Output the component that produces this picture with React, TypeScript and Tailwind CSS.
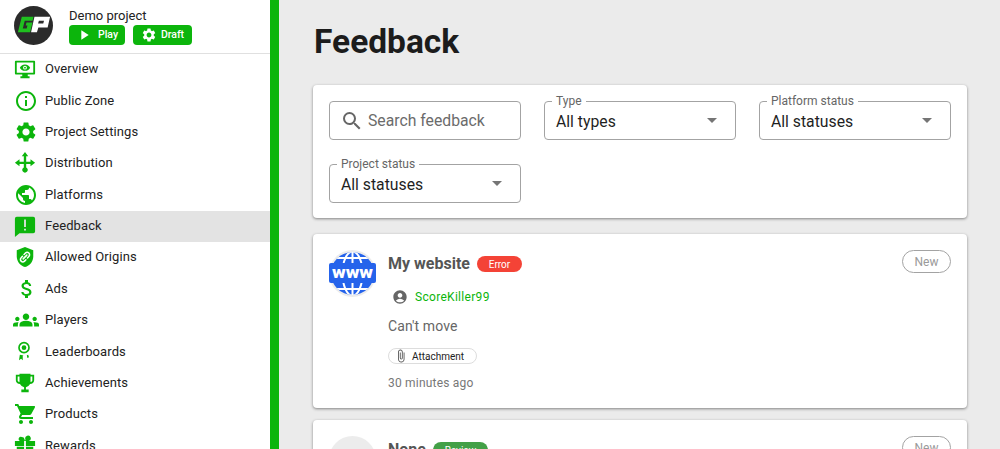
import React from 'react';
import {
  MdSettings,
  MdInfoOutline,
  MdPublic,
  MdAttachMoney,
  MdGroups,
  MdShoppingCart,
  MdAccountCircle,
  MdArrowDropDown,
  MdSearch,
  MdAttachFile,
  MdPlayArrow,
} from 'react-icons/md';

const green = 'text-[#0cb50c]';
const cardShadow = 'shadow-[0_1px_3px_rgba(0,0,0,0.45)]';

const GP = () => (
  <svg viewBox="0 0 40 40" className="w-[39px] h-[39px] shrink-0">
    <circle cx="20" cy="20" r="20" fill="#2b2b2b" />
    <path d="M8 11h12l-1 4h-8l-2 8h4l.8-3H12l.8-3H19l-2.500 10H4z" fill="#1fc01f" />
    <path d="M21 11h16l-2.500 11H25l-1.500 5h-6zM25.500 15l-.8 3H30l.8-3z" fill="#fff" fillRule="evenodd" />
  </svg>
);

const Monitor = () => (
  <svg viewBox="0 0 24 24" className="w-[22px] h-[22px]" fill="currentColor">
    <path d="M2 3h20a1 1 0 0 1 1 1v13a1 1 0 0 1-1 1h-7v2h2v2H7v-2h2v-2H2a1 1 0 0 1-1-1V4a1 1 0 0 1 1-1zm1 2v11h18V5z" />
    <path d="M12 7c-2.700 0-4.700 1.600-5.600 3.500C7.300 12.400 9.300 14 12 14s4.700-1.600 5.600-3.500C16.700 8.600 14.700 7 12 7zm0 5.600a2.100 2.100 0 1 1 0-4.200 2.100 2.100 0 0 1 0 4.200z" />
    <circle cx="12" cy="10.500" r="1" />
  </svg>
);

const Distribution = () => (
  <svg viewBox="0 0 24 24" className="w-[22px] h-[22px]" fill="currentColor">
    <path d="M12 0l3.500 4.500H13.300V10.500H18V8l5 3.800-5 3.800v-2.600h-4.700v3.800a3 3 0 1 1-2.600 0V13H6v2.600L1 11.800 6 8v2.500h4.700V4.500H8.500z" />
  </svg>
);

const Bubble = () => (
  <svg viewBox="0 0 24 24" className="w-[22px] h-[22px]" fill="currentColor">
    <path d="M3 2h18a2 2 0 0 1 2 2v14a2 2 0 0 1-2 2H6l-5 4V4a2 2 0 0 1 2-2zm8 3v8h2V5zm0 10v2h2v-2z" fillRule="evenodd" />
  </svg>
);

const Shield = () => (
  <svg viewBox="0 0 24 24" className="w-[22px] h-[22px]" fill="currentColor">
    <path d="M12 1l9 3.500v7c0 5.500-3.800 10-9 11.500-5.200-1.500-9-6-9-11.500v-7z" />
    <g stroke="#fff" strokeWidth="1.700" fill="none" strokeLinecap="round">
      <path d="M10 14l4-4" />
      <path d="M11 9.200l1.500-1.500a2.600 2.600 0 0 1 3.700 3.700L14.700 13" />
      <path d="M13 15l-1.500 1.500a2.600 2.600 0 0 1-3.700-3.700L9.300 11.200" />
    </g>
  </svg>
);

const Medal = () => (
  <svg viewBox="0 0 24 24" className="w-[20px] h-[20px]" fill="currentColor">
    <path d="M12 1a7 7 0 1 1 0 14 7 7 0 0 1 0-14zm0 2a5 5 0 1 0 0 10 5 5 0 0 0 0-10z" fillRule="evenodd" />
    <circle cx="12" cy="8" r="2.800" />
    <path d="M7 16.500l4.500 1-1 .5V23l-2-1.600L6 23zM17 16.500l1 3-2 1-.6-3.500z" />
  </svg>
);

const Trophy = () => (
  <svg viewBox="0 0 24 24" className="w-[22px] h-[22px]" fill="currentColor">
    <path d="M6 2h12v1h4v6c0 2.500-2 4-4.500 4.200A6 6 0 0 1 13 16.500V19h3v3H8v-3h3v-2.500a6 6 0 0 1-4.500-3.300C4 13 2 11.500 2 9V3h4zM4 5v4c0 1 .8 1.800 2 2V5zm14 0v6c1.200-.2 2-1 2-2V5z" fillRule="evenodd" />
  </svg>
);

const Gift = () => (
  <svg viewBox="0 0 24 24" className="w-[22px] h-[22px] overflow-visible" fill="currentColor">
    <path d="M8.500 3.300a3 3 0 0 1 3 2.500l.5 1.800.5-1.800a3 3 0 1 1 3.500 1.800H23V13H13V7.600h-2V13H1V7.600h5.500a2.200 2.200 0 0 1 2-4.300zM3 14h8v10H3zm10 0h8v10h-8z" fillRule="evenodd" />
  </svg>
);

const nav = [
  { label: 'Overview', icon: <Monitor /> },
  { label: 'Public Zone', icon: <MdInfoOutline size={24} /> },
  { label: 'Project Settings', icon: <MdSettings size={24} /> },
  { label: 'Distribution', icon: <Distribution /> },
  { label: 'Platforms', icon: <MdPublic size={24} /> },
  { label: 'Feedback', icon: <Bubble />, active: true },
  { label: 'Allowed Origins', icon: <Shield /> },
  { label: 'Ads', icon: <MdAttachMoney size={24} className="ml-[1px]" /> },
  { label: 'Players', icon: <MdGroups size={26} className="-ml-[1px]" /> },
  { label: 'Leaderboards', icon: <Medal /> },
  { label: 'Achievements', icon: <Trophy /> },
  { label: 'Products', icon: <MdShoppingCart size={24} /> },
  { label: 'Rewards', icon: <Gift /> },
];

const Outlined = ({ label, value }: { label: string; value: string }) => (
  <div className="relative h-[39px] rounded border border-[#a3a3a3] flex items-center pl-[11px] pr-[11px]">
    <span className="absolute -top-[8px] left-[7px] bg-white px-[4px] text-[12px] leading-[14px] text-[#666]">{label}</span>
    <span className="flex-1 text-[15.75px] text-[#1f1f1f] pt-[3px]">{value}</span>
    <MdArrowDropDown size={24} className="text-[#757575] -mt-[1px]" />
  </div>
);

const NewBadge = () => (
  <span className="ml-auto h-[23px] w-[49px] rounded-full border border-[#a3a3a3] text-[12px] text-[#9a9a9a] flex items-center justify-center">New</span>
);

export default function App() {
  return (
    <div className="w-[1000px] h-[449px] overflow-hidden flex bg-[#ebebeb] font-['Roboto',sans-serif]">
      <aside className="w-[279px] shrink-0 h-full bg-white border-r-[9px] border-[#0cb50c] overflow-hidden">
        <div className="h-[54px] flex items-center pl-[14px] gap-4 border-b border-[#e0e0e0] pb-[2px]">
          <GP />
          <div className="flex flex-col">
            <span className="text-[13px] leading-[15px] text-[#222] pb-[2px] pt-[1px]">Demo project</span>
            <div className="flex gap-2">
              <span className="w-[56px] h-[20px] rounded bg-[#0cb50c] text-white text-[10.5px] font-medium flex items-center justify-center gap-[6px]">
                <MdPlayArrow size={16} /> Play
              </span>
              <span className="w-[59px] h-[20px] rounded bg-[#0cb50c] text-white text-[10.5px] font-medium flex items-center justify-center gap-[4px]">
                <MdSettings size={16} /> Draft
              </span>
            </div>
          </div>
        </div>
        <nav>
          {nav.map((n) => (
            <div key={n.label} className={`h-[31.35px] flex items-center ${n.active ? 'bg-[#e3e3e3]' : ''}`}>
              <span className={`w-[45px] pl-[14px] shrink-0 flex justify-start ${green} -mt-[1px]`}>{n.icon}</span>
              <span className="text-[13px] tracking-[0.1px] text-[#222] pb-[1px]">{n.label}</span>
            </div>
          ))}
        </nav>
      </aside>
      <main className="flex-1 pl-[34px] pr-[33px] min-w-0">
        <h1 className="text-[33.5px] font-bold leading-[40px] text-[#1c1c1c] mt-[22px] mb-[23px] ml-[1px]">Feedback</h1>
        <section className={`bg-white rounded ${cardShadow} p-4 h-[133px]`}>
          <div className="grid grid-cols-[192px_192px_192px] gap-x-[23px] gap-y-6">
            <div className="h-[39px] rounded border border-[#a3a3a3] flex items-center pl-[10px] gap-1">
              <MdSearch size={24} className="text-[#666]" />
              <span className="text-[15.75px] text-[#6b6b6b]">Search feedback</span>
            </div>
            <Outlined label="Type" value="All types" />
            <Outlined label="Platform status" value="All statuses" />
            <Outlined label="Project status" value="All statuses" />
          </div>
        </section>
        <section className={`mt-4 bg-white rounded ${cardShadow} h-[174px] p-4 flex`}>
          <svg viewBox="0 0 47 47" className="w-[47px] h-[47px] shrink-0">
            <defs>
              <clipPath id="c"><circle cx="23.500" cy="23.500" r="21.500" /></clipPath>
            </defs>
            <circle cx="23.500" cy="23.500" r="23.500" fill="#ececec" />
            <circle cx="23.500" cy="23.500" r="21.500" fill="#2563eb" />
            <g clipPath="url(#c)" fill="none" stroke="#fff" strokeWidth="2">
              <ellipse cx="23.500" cy="23.500" rx="10" ry="22" />
              <path d="M23.500 0v47M0 8h47M0 39h47" />
            </g>
            <rect x="0" y="13" width="47" height="20" rx="2" fill="#2563eb" />
            <text x="23.500" y="27.500" textAnchor="middle" fill="#fff" fontSize="17" fontWeight="900" textLength="41" lengthAdjust="spacingAndGlyphs" fontFamily="Roboto">www</text>
          </svg>
          <div className="ml-3 flex-1 min-w-0">
            <div className="flex items-start gap-[7px]">
              <span className="text-[16px] leading-[28px] font-bold text-[#555]">My website</span>
              <span className="mt-[6px] h-4 w-[45px] rounded-full bg-[#f44336] text-white text-[10px] flex items-center justify-center">Error</span>
              <NewBadge />
            </div>
            <div className="flex items-center mt-[9px] pl-[4px] h-[20px]">
              <MdAccountCircle size={16} className="text-[#666]" />
              <span className="ml-[7px] text-[12px] text-[#0cb50c] tracking-[0.3px]">ScoreKiller99</span>
            </div>
            <p className="mt-[9px] text-[14px] leading-[20px] text-[#666] tracking-[0.1px]">Can't move</p>
            <div className="mt-3 h-4 w-[89px] rounded-full border border-[#ddd] flex items-center pl-[5px] gap-1">
              <MdAttachFile size={14} className="text-[#555]" />
              <span className="text-[10px] text-[#222]">Attachment</span>
            </div>
            <p className="mt-[11px] text-[12px] leading-[16px] text-[#777] tracking-[0.2px]">30 minutes ago</p>
          </div>
        </section>
        <section className={`mt-3 bg-white rounded ${cardShadow} h-[120px] p-4 flex`}>
          <span className="w-[47px] h-[47px] rounded-full bg-[#ececec] shrink-0" />
          <div className="ml-3 flex-1 min-w-0">
            <div className="flex items-start gap-[7px]">
              <span className="text-[16px] leading-[28px] font-bold text-[#555]">None</span>
              <span className="mt-[6px] h-4 w-[55px] rounded-full bg-[#43a047] text-white text-[10px] flex items-center justify-center">Review</span>
              <NewBadge />
            </div>
          </div>
        </section>
      </main>
    </div>
  );
}
